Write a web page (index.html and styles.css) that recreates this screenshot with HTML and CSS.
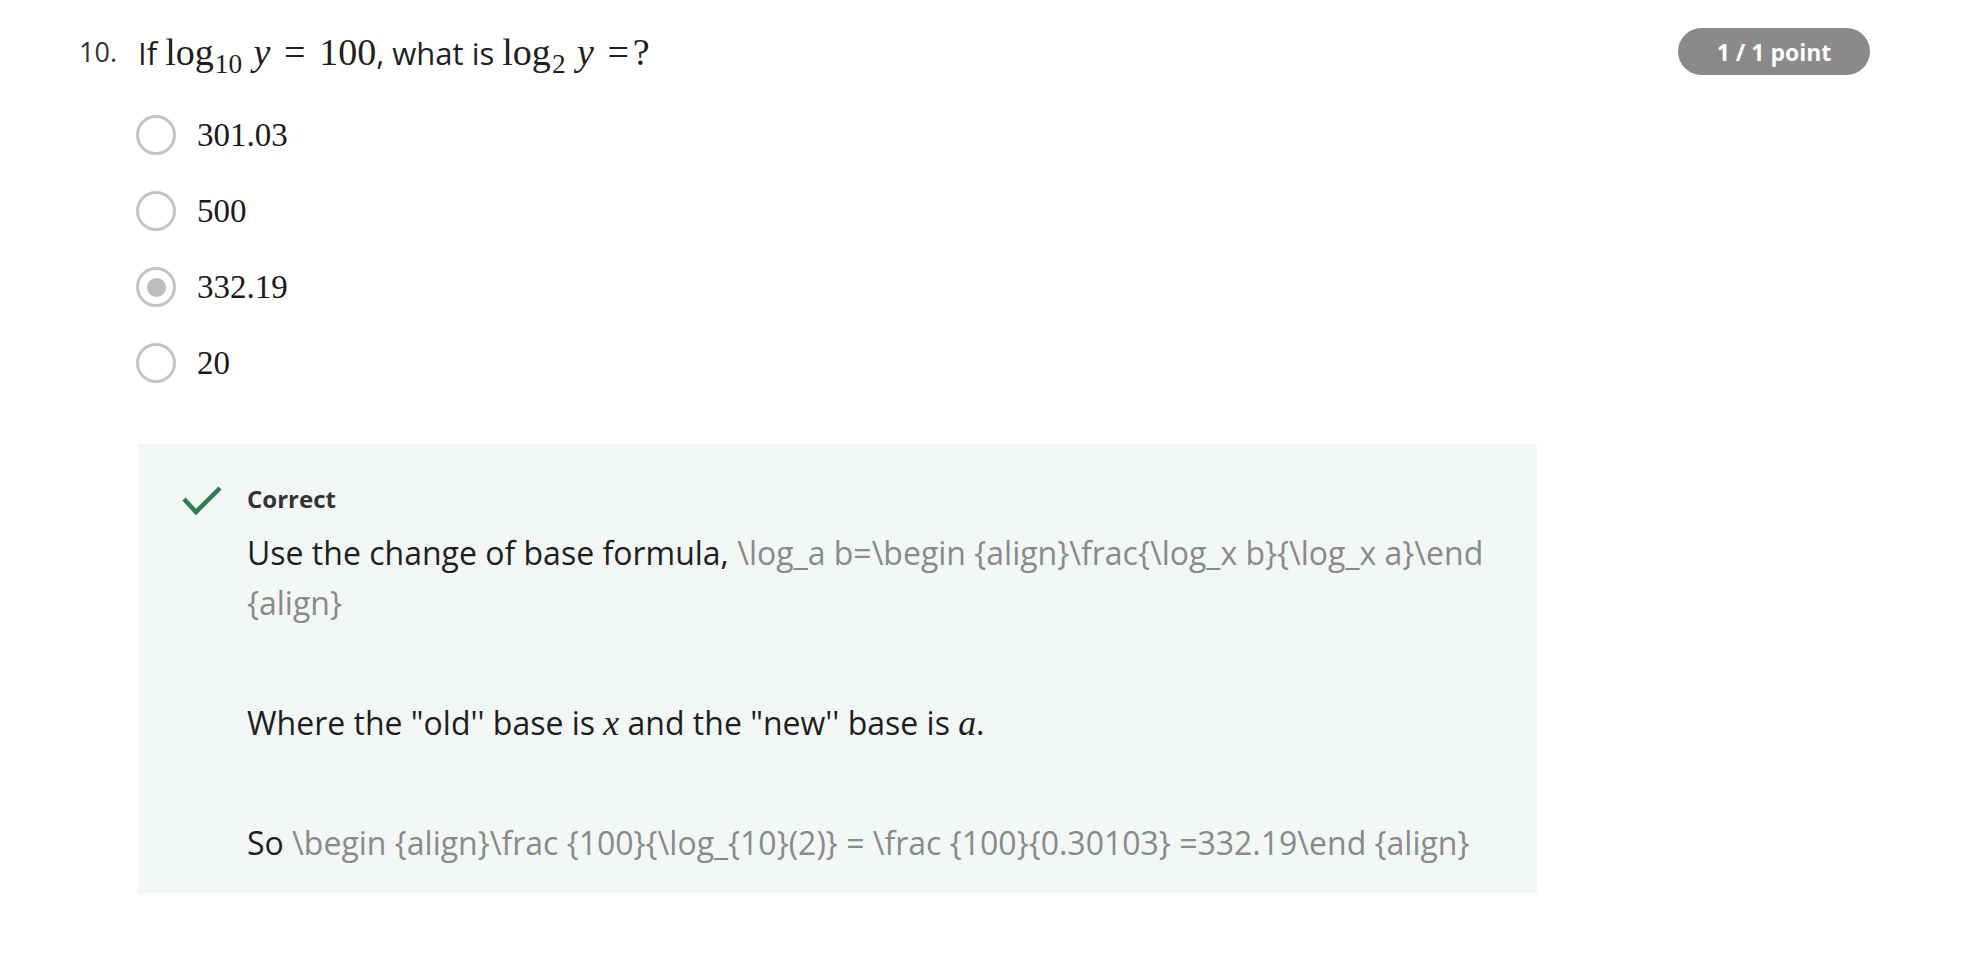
FILE: index.html
```html
<!DOCTYPE html>
<html lang="en">
<head>
<meta charset="utf-8">
<title>Question 10</title>
<link rel="stylesheet" href="styles.css">
</head>
<body>
<div class="question">
  <div class="q-header">
    <div class="q-num">10.</div>
    <div class="q-text">If <span class="math">log<sub>10</sub><span class="sp"></span><i>y</i><span class="rel">=</span>100</span>, what is <span class="math">log<sub>2</sub><span class="sp"></span><i>y</i><span class="rel rel-end">=</span>?</span></div>
    <div class="badge">1 / 1 point</div>
  </div>
  <div class="options">
    <div class="option"><span class="radio"></span><span class="opt-text">301.03</span></div>
    <div class="option"><span class="radio"></span><span class="opt-text">500</span></div>
    <div class="option"><span class="radio checked"></span><span class="opt-text">332.19</span></div>
    <div class="option"><span class="radio"></span><span class="opt-text">20</span></div>
  </div>
  <div class="feedback">
    <svg class="check" width="40" height="30" viewBox="0 0 40 30"><path d="M2 13 L14 26 L38 2" fill="none" stroke="#2e7d52" stroke-width="4.5"/></svg>
    <div class="fb-body">
      <div class="fb-title">Correct</div>
      <p>Use the change of base formula, <span class="latex">\log_a b=\begin {align}\frac{\log_x b}{\log_x a}\end {align}</span></p>
      <p>Where the "old'' base is <i class="mvar">x</i> and the "new'' base is <i class="mvar">a</i>.</p>
      <p>So <span class="latex">\begin {align}\frac {100}{\log_{10}(2)} = \frac {100}{0.30103} =332.19\end {align}</span></p>
    </div>
  </div>
</div>
</body>
</html>
```
FILE: styles.css
```css
html, body {
  margin: 0;
  padding: 0;
  background: #ffffff;
}
body {
  font-family: "Open Sans", "Liberation Sans", sans-serif;
  color: #1f1f1f;
}
.question {
  padding: 28px 94px 40px 79px;
}
.q-header {
  display: flex;
  align-items: center;
  height: 47px;
}
.q-num {
  width: 59px;
  font-size: 27px;
  color: #333;
}
.q-text {
  flex: 1;
  font-size: 31px;
  white-space: nowrap;
}
.math {
  font-family: "Liberation Serif", "DejaVu Serif", serif;
  font-size: 38px;
}
.math sub {
  font-size: 0.72em;
  vertical-align: -0.32em;
  line-height: 0;
  padding-left: 0.04em;
}
.math i, .mvar {
  font-family: "Liberation Serif", "DejaVu Serif", serif;
  font-style: italic;
}
.mvar {
  font-size: 1.12em;
}
.sp {
  display: inline-block;
  width: 0.3em;
}
.rel {
  display: inline-block;
  padding: 0 0.36em;
}
.rel.rel-end {
  padding-right: 0.1em;
}
.badge {
  width: 192px;
  height: 47px;
  border-radius: 24px;
  background: #8a8a8a;
  color: #fff;
  font-weight: 700;
  font-size: 23px;
  display: flex;
  align-items: center;
  justify-content: center;
}
.options {
  margin: 22px 0 0 57px;
}
.option {
  display: flex;
  align-items: center;
  height: 76px;
}
.radio {
  box-sizing: border-box;
  width: 40px;
  height: 40px;
  border: 3.5px solid #c4c4c4;
  border-radius: 50%;
  display: flex;
  align-items: center;
  justify-content: center;
  margin-right: 21px;
}
.radio.checked::after {
  content: "";
  width: 19px;
  height: 19px;
  border-radius: 50%;
  background: #bdbdbd;
}
.opt-text {
  font-family: "Liberation Serif", "DejaVu Serif", serif;
  font-size: 33px;
  color: #1a1a1a;
}
.feedback {
  margin: 43px 0 0 59px;
  width: 1399px;
  box-sizing: border-box;
  background: #f3f8f6;
  display: flex;
  padding: 38px 40px 26px 44px;
}
.check {
  flex: none;
  margin: 4px 25px 0 0;
}
.fb-body {
  flex: 1;
}
.fb-title {
  font-weight: 700;
  font-size: 24px;
  line-height: 34px;
  color: #333;
  margin-bottom: 12px;
}
.fb-body p {
  margin: 0 0 70px;
  font-size: 32px;
  line-height: 50px;
  color: #1f1f1f;
}
.fb-body p:last-child {
  margin-bottom: 0;
}
.latex {
  color: #8a8a8a;
}
```
